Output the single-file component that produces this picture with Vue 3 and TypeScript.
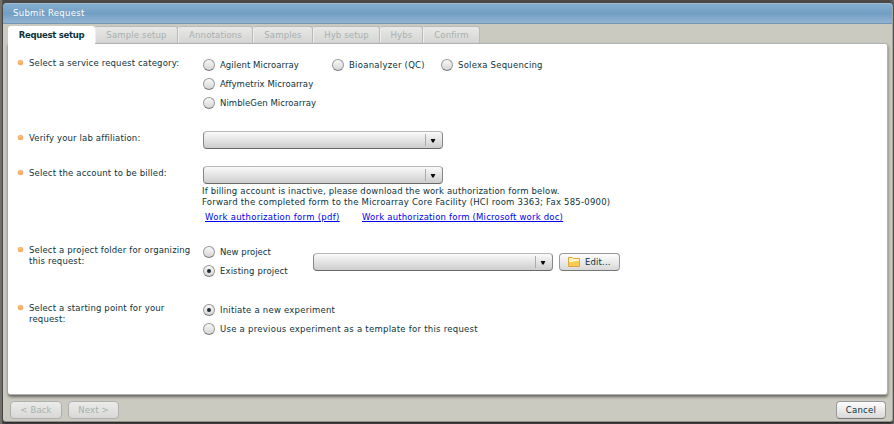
<script setup lang="ts">
import { ref } from 'vue'

interface Tab { id: string; label: string }
interface Option { id: string; label: string }

const tabs: Tab[] = [
  { id: 'setup', label: 'Request setup' },
  { id: 'sample', label: 'Sample setup' },
  { id: 'annotations', label: 'Annotations' },
  { id: 'samples', label: 'Samples' },
  { id: 'hybsetup', label: 'Hyb setup' },
  { id: 'hybs', label: 'Hybs' },
  { id: 'confirm', label: 'Confirm' },
]
const categories: Option[][] = [
  [
    { id: 'agilent', label: 'Agilent Microarray' },
    { id: 'affymetrix', label: 'Affymetrix Microarray' },
    { id: 'nimblegen', label: 'NimbleGen Microarray' },
  ],
  [{ id: 'bioanalyzer', label: 'Bioanalyzer (QC)' }],
  [{ id: 'solexa', label: 'Solexa Sequencing' }],
]
const projects: Option[] = [
  { id: 'new', label: 'New project' },
  { id: 'existing', label: 'Existing project' },
]
const starts: Option[] = [
  { id: 'initiate', label: 'Initiate a new experiment' },
  { id: 'template', label: 'Use a previous experiment as a template for this request' },
]
const category = ref('')
const project = ref('existing')
const start = ref('initiate')
</script>

<template>
  <div class="backdrop">
    <main class="window">
      <header class="title"><span>Submit Request</span></header>
      <nav class="tabs">
        <button v-for="(t, i) in tabs" :key="t.id" :class="['tab', t.id, { active: i === 0 }]" :disabled="i > 0"><span>{{ t.label }}</span></button>
      </nav>
      <section class="panel">
        <div class="row r1">
          <i class="bullet"></i>
          <div class="label"><span>Select a service request category:</span></div>
          <div class="cats">
            <div v-for="(col, c) in categories" :key="c">
              <label v-for="o in col" :key="o.id" :class="['radio', o.id]" @click="category = o.id">
                <i :class="['dot', { on: category === o.id }]"></i><span>{{ o.label }}</span>
              </label>
            </div>
          </div>
        </div>
        <div class="row r2">
          <i class="bullet"></i>
          <div class="label"><span>Verify your lab affiliation:</span></div>
          <div><div class="combo"><svg viewBox="0 0 7 5"><path d="M0.5 0H6.5L5 3.2 3.5 5 2 3.2Z" /></svg></div></div>
        </div>
        <div class="row r3">
          <i class="bullet"></i>
          <div class="label"><span>Select the account to be billed:</span></div>
          <div>
            <div class="combo"><svg viewBox="0 0 7 5"><path d="M0.5 0H6.5L5 3.2 3.5 5 2 3.2Z" /></svg></div>
            <p class="note n1"><span>If billing account is inactive, please download the work authorization form below.</span></p>
            <p class="note n2"><span>Forward the completed form to the Microarray Core Facility (HCI room 3363; Fax 585-0900)</span></p>
            <div class="links">
              <div class="pdf"><a>Work authorization form (pdf)</a></div>
              <div class="doc"><a>Work authorization form (Microsoft work doc)</a></div>
            </div>
          </div>
        </div>
        <div class="row r4">
          <i class="bullet"></i>
          <div class="label"><span>Select a project folder for organizing</span><br /><span>this request:</span></div>
          <div class="project">
            <div class="choices">
              <label v-for="o in projects" :key="o.id" :class="['radio', o.id]" @click="project = o.id">
                <i :class="['dot', { on: project === o.id }]"></i><span>{{ o.label }}</span>
              </label>
            </div>
            <div class="combo"><svg viewBox="0 0 7 5"><path d="M0.5 0H6.5L5 3.2 3.5 5 2 3.2Z" /></svg></div>
            <button class="btn edit">
              <svg class="folder" viewBox="0 0 12 10">
                <path d="M.5 9.5V.5H4.5L5.5 1.5H11.5V9.5Z" fill="#fff3b8" stroke="#e0a33d" />
                <path d="M1 9V5H5L6 4H11V9Z" fill="#f7cc52" />
                <path d="M1 4.5H5L6 3.5H11" fill="none" stroke="#fffbe2" />
              </svg>
              <span>Edit...</span>
            </button>
          </div>
        </div>
        <div class="row r5">
          <i class="bullet"></i>
          <div class="label"><span>Select a starting point for your</span><br /><span>request:</span></div>
          <div>
            <label v-for="o in starts" :key="o.id" :class="['radio', o.id]" @click="start = o.id">
              <i :class="['dot', { on: start === o.id }]"></i><span>{{ o.label }}</span>
            </label>
          </div>
        </div>
      </section>
      <footer class="actions">
        <button class="btn back" disabled>&lt; Back</button>
        <button class="btn next" disabled>Next &gt;</button>
        <button class="btn cancel">Cancel</button>
      </footer>
    </main>
  </div>
</template>

<style>
body { margin: 0; background: #555; }
</style>

<style scoped>
* { box-sizing: border-box; }
.backdrop { width: 894px; height: 424px; padding: 3px 1px 0 3px; background: linear-gradient(90deg, #74706b 0 2px, #57544f 2px 3px, transparent 3px 891px, #5f5e5c 891px), #4c4a48; overflow: hidden; }
.backdrop, button { font-family: "DejaVu Sans", Verdana, sans-serif; font-size: 8.5px; line-height: 11px; letter-spacing: .16px; color: #0b333c; }
span, a { white-space: nowrap; }
button { margin: 0; padding: 0; }
.window { display: flex; flex-direction: column; width: 890px; height: 419px; border-radius: 4px 4px 3px 3px; background: #cbcac0; border-bottom: 1px solid #92918b; border-right: 1px solid #a6a69e; overflow: hidden; box-shadow: 0 1px 2px #222; }
.title { height: 21px; flex: none; padding: 4px 0 0 10px; color: #fff; background: linear-gradient(#85aed0, #719fc4 50%, #8eb1d1 92%); border-top: 1px solid #9dbbd3; border-bottom: 1px solid #7797b1; letter-spacing: .3px; }
.tabs { display: flex; height: 19px; padding: 2px 0 0 5px; flex: none; }
.tab { flex: none; height: 17px; border: 1px solid #b8babb; border-width: 1px 1px 0 0; border-left: 1px solid #eeeeec; border-radius: 3px 3px 0 0; background: linear-gradient(#e8e8e6, #d5d5d3); color: #a6b0b0; }
.tab.active { position: relative; height: 19px; padding-bottom: 1px; background: #fff; border-color: #fff; color: #0b333c; font-weight: bold; letter-spacing: -.28px; }
.setup { width: 87px; } .sample { width: 83px; } .annotations { width: 75px; } .samples { width: 60px; } .hybsetup { width: 67px; } .hybs { width: 43px; } .confirm { width: 57px; }
.panel { flex: none; width: 880px; height: 352px; margin-left: 5px; padding: 12px 0 0 10px; background: #fff; border: 1px solid #aeb3b4; border-width: 1px 1px 1px 0; border-radius: 0 3px 3px 3px; box-shadow: 0 2px 3px #66655f; }
.row { display: grid; grid-template-columns: 11px 173px 1fr; }
.r1 { height: 75px; } .r2 { height: 35px; } .r3 { height: 77px; } .r4 { height: 58px; }
.bullet { width: 5px; height: 5px; margin-top: 4px; border-radius: 50%; background: radial-gradient(circle at 50% 40%, #ffc488, #f28e32); box-shadow: 0 0 1px #f28e32; }
.label { padding-top: 2px; }
.cats { display: grid; grid-template-columns: 129px 109px 200px; }
.radio { display: flex; align-items: center; height: 19px; gap: 5px; padding-left: 1px; }
.agilent, .affymetrix { letter-spacing: .06px; }
.nimblegen { letter-spacing: .05px; }
.bioanalyzer, .template { letter-spacing: .26px; }
.solexa, .initiate { letter-spacing: .23px; }
.new { letter-spacing: 0; }
.existing { letter-spacing: .12px; }
.dot { display: grid; place-items: center; flex: none; width: 12px; height: 12px; margin-bottom: 2px; border: 1px solid #97999a; border-bottom-color: #7d7e7f; border-radius: 50%; background: linear-gradient(#f8f8f8, #d6d6d6); }
.dot.on::after { content: ""; width: 4px; height: 4px; border-radius: 50%; background: #222c31; }
.combo { position: relative; width: 240px; height: 18px; margin-left: 1px; border: 1px solid #858687; border-top-color: #b5b7b8; border-bottom-color: #686969; border-radius: 4px; background: linear-gradient(#fafafa, #cdcdcd); }
.combo::after { content: ""; position: absolute; top: 2px; bottom: 2px; right: 16px; width: 1px; background: #acacac; }
.combo svg { position: absolute; top: 7px; right: 6px; width: 6px; height: 4px; fill: #0b0b0b; }
.note { margin: 0; height: 11px; }
.n1 { margin-top: 2px; }
.n2 { letter-spacing: .23px; }
.links { display: flex; padding: 4px 0 0 3px; }
.links a { color: #0000ee; text-decoration: underline; text-underline-offset: 1px; }
.pdf { width: 157px; letter-spacing: .29px; }
.doc { letter-spacing: .2px; }
.project { display: flex; align-items: flex-start; }
.choices { width: 110px; }
.project .combo { margin-top: 10px; }
.btn { height: 18px; border: 1px solid #98999a; border-bottom-color: #777; border-radius: 4px; background: linear-gradient(#fdfdfd, #d8d8d8); text-align: center; }
.edit { display: flex; align-items: center; gap: 5px; width: 61px; margin: 10px 0 0 6px; padding-left: 8px; }
.folder { width: 12px; height: 10px; }
.actions { display: flex; padding: 6px 6px 0 7px; gap: 6px; letter-spacing: .2px; }
.back { width: 52px; } .next { width: 51px; } .cancel { width: 50px; margin-left: auto; letter-spacing: .25px; }
.btn:disabled { color: #a6b0b0; border-color: #afb0ae; background: linear-gradient(#ebebe9, #d8d8d6); }
</style>
